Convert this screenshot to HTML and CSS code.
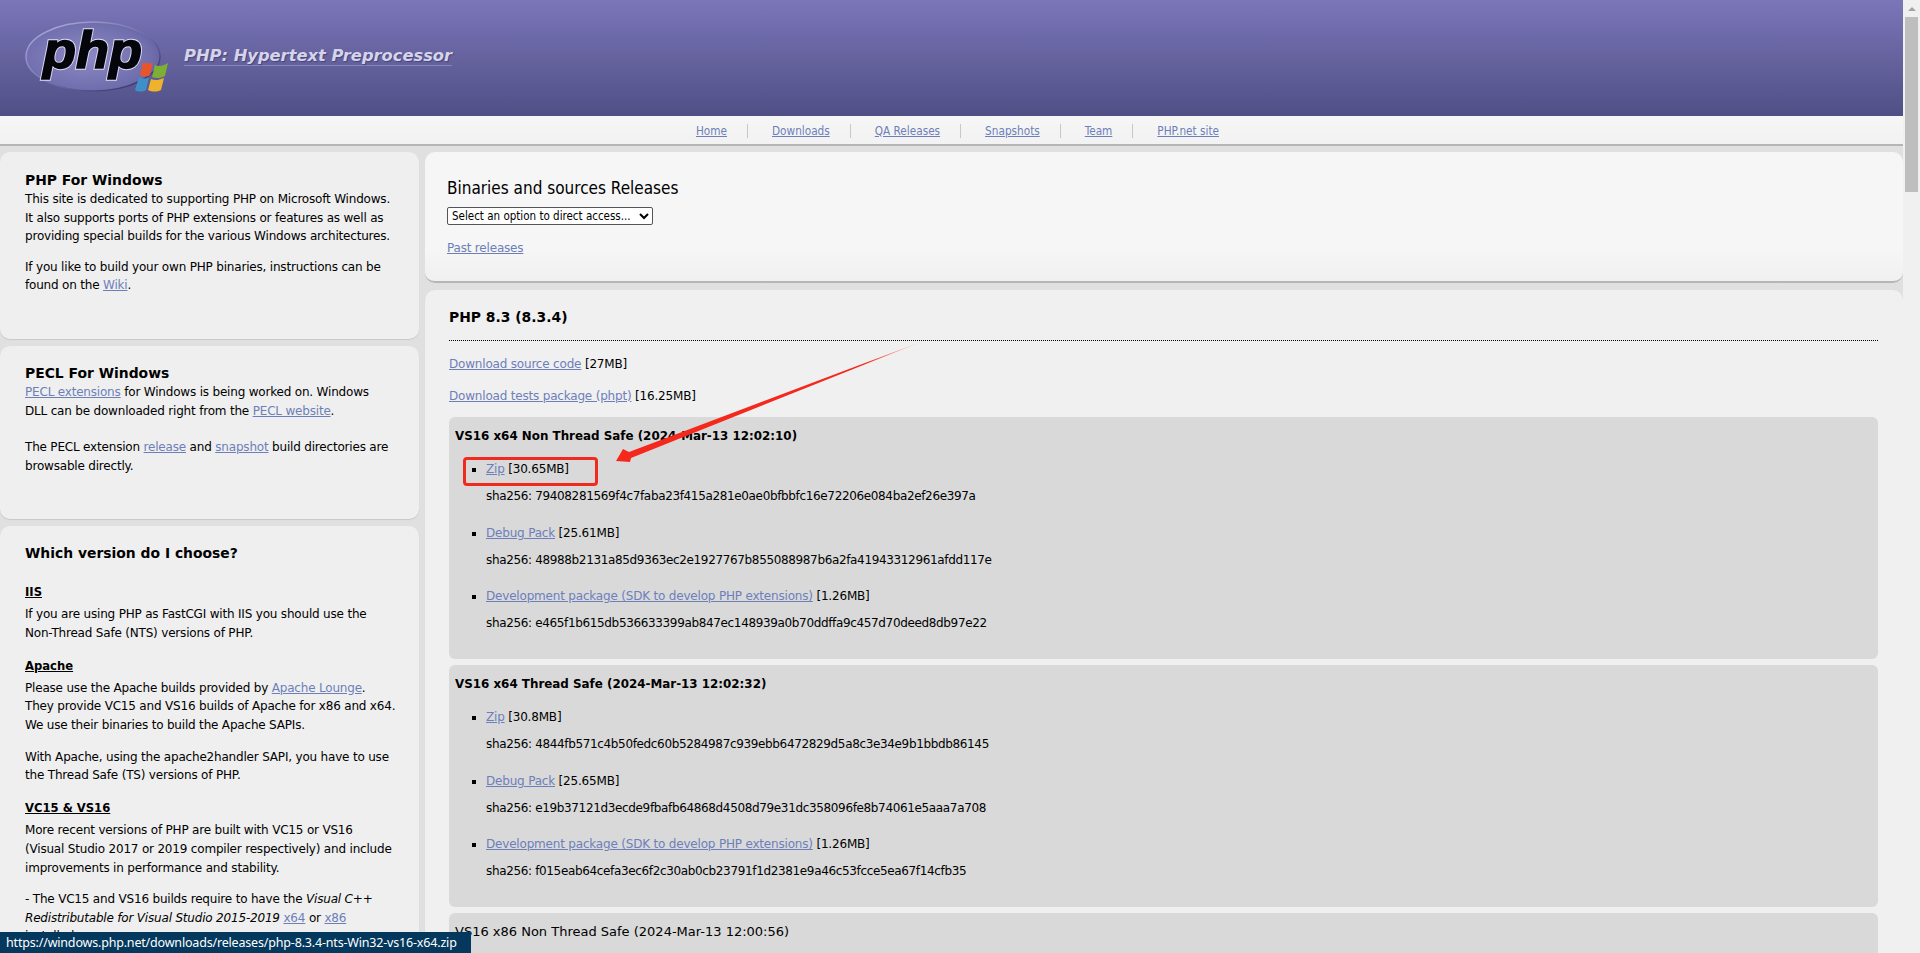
FILE: index.html
```html
<!DOCTYPE html>
<html lang="en">
<head>
  <meta charset="UTF-8">
  <title>PHP For Windows: Binaries and sources Releases</title>
  <link rel="stylesheet" href="styles.css">
</head>
<body>
  <div class="page">
    <header class="masthead">
      <svg class="logo" width="172" height="116" viewBox="0 0 172 116">
        <defs>
          <radialGradient id="oval" cx="45%" cy="50%" r="60%">
            <stop offset="0" stop-color="#8d89c4"/>
            <stop offset="0.8" stop-color="#716eae"/>
            <stop offset="1" stop-color="#625f9e"/>
          </radialGradient>
          <linearGradient id="rim" x1="0" y1="0" x2="1" y2="1">
            <stop offset="0" stop-color="#b9b6e6"/>
            <stop offset="0.55" stop-color="#6f6bad"/>
            <stop offset="1" stop-color="#24245a"/>
          </linearGradient>
        </defs>
        <ellipse cx="93" cy="56.5" rx="67" ry="34.5" fill="url(#oval)" stroke="url(#rim)" stroke-width="1.5"/>
        <text class="logo-edge" x="43" y="68" textLength="99" lengthAdjust="spacingAndGlyphs">php</text>
        <text class="logo-word" x="43" y="68" textLength="99" lengthAdjust="spacingAndGlyphs">php</text>
        <path d="M143 62c4 2 7 2 10 0l-3 13c-3 2-7 2-10 0z" fill="#e8552a"/>
        <path d="M155 65c4 2 8 1 13-2l-3 13c-4 2-8 3-13 1z" fill="#7fae34"/>
        <path d="M139 77c3 2 7 2 10 0l-3 13c-3 2-8 2-11 0z" fill="#3f90c8"/>
        <path d="M151 79c4 2 8 1 13-1l-3 12c-4 2-9 2-13 0z" fill="#eeb22c"/>
      </svg>
      <span class="tagline">PHP: Hypertext Preprocessor</span>
    </header>

    <nav class="topnav">
      <ul>
        <li><a href="#">Home</a></li>
        <li><a href="#">Downloads</a></li>
        <li><a href="#">QA Releases</a></li>
        <li><a href="#">Snapshots</a></li>
        <li><a href="#">Team</a></li>
        <li><a href="#">PHP.net site</a></li>
      </ul>
    </nav>

    <div class="columns">
      <aside class="sidebar">
        <section class="box box-intro">
          <h3>PHP For Windows</h3>
          <p>This site is dedicated to supporting PHP on Microsoft Windows. It also supports ports of PHP extensions or features as well as providing special builds for the various Windows architectures.</p>
          <p>If you like to build your own PHP binaries, instructions can be found on the <a href="#">Wiki</a>.</p>
        </section>
        <section class="box box-pecl">
          <h3>PECL For Windows</h3>
          <p><a href="#">PECL extensions</a> for Windows is being worked on. Windows<br>DLL can be downloaded right from the <a href="#">PECL website</a>.</p>
          <p class="spaced">The PECL extension <a href="#">release</a> and <a href="#">snapshot</a> build directories are browsable directly.</p>
        </section>
        <section class="box box-choose">
          <h3 class="choose-title">Which version do I choose?</h3>
          <h4>IIS</h4>
          <p>If you are using PHP as FastCGI with IIS you should use the<br>Non-Thread Safe (NTS) versions of PHP.</p>
          <h4>Apache</h4>
          <p>Please use the Apache builds provided by <a href="#">Apache Lounge</a>.<br>They provide VC15 and VS16 builds of Apache for x86 and x64.<br>We use their binaries to build the Apache SAPIs.</p>
          <p>With Apache, using the apache2handler SAPI, you have to use the Thread Safe (TS) versions of PHP.</p>
          <h4>VC15 &amp; VS16</h4>
          <p>More recent versions of PHP are built with VC15 or VS16<br>(Visual Studio 2017 or 2019 compiler respectively) and include improvements in performance and stability.</p>
          <p>- The VC15 and VS16 builds require to have the <em>Visual C++ Redistributable for Visual Studio 2015-2019</em> <a href="#">x64</a> or <a href="#">x86</a><br>installed</p>
        </section>
      </aside>

      <main class="content">
        <section class="box box-head">
          <h2>Binaries and sources Releases</h2>
          <select class="jump">
            <option>Select an option to direct access...</option>
          </select>
          <p class="past"><a href="#">Past releases</a></p>
        </section>

        <section class="box box-release">
          <h3 class="version">PHP 8.3 (8.3.4)</h3>
          <p class="source"><a href="#">Download source code</a> [27MB]</p>
          <p class="source"><a href="#">Download tests package (phpt)</a> [16.25MB]</p>

          <div class="build">
            <h4>VS16 x64 Non Thread Safe (2024-Mar-13 12:02:10)</h4>
            <ul>
              <li><a href="#">Zip</a> [30.65MB]<span class="sha">sha256: 79408281569f4c7faba23f415a281e0ae0bfbbfc16e72206e084ba2ef26e397a</span></li>
              <li><a href="#">Debug Pack</a> [25.61MB]<span class="sha">sha256: 48988b2131a85d9363ec2e1927767b855088987b6a2fa41943312961afdd117e</span></li>
              <li><a href="#">Development package (SDK to develop PHP extensions)</a> [1.26MB]<span class="sha">sha256: e465f1b615db536633399ab847ec148939a0b70ddffa9c457d70deed8db97e22</span></li>
            </ul>
          </div>

          <div class="build">
            <h4>VS16 x64 Thread Safe (2024-Mar-13 12:02:32)</h4>
            <ul>
              <li><a href="#">Zip</a> [30.8MB]<span class="sha">sha256: 4844fb571c4b50fedc60b5284987c939ebb6472829d5a8c3e34e9b1bbdb86145</span></li>
              <li><a href="#">Debug Pack</a> [25.65MB]<span class="sha">sha256: e19b37121d3ecde9fbafb64868d4508d79e31dc358096fe8b74061e5aaa7a708</span></li>
              <li><a href="#">Development package (SDK to develop PHP extensions)</a> [1.26MB]<span class="sha">sha256: f015eab64cefa3ec6f2c30ab0cb23791f1d2381e9a46c53fcce5ea67f14cfb35</span></li>
            </ul>
          </div>

          <div class="build build-cut">
            <h4>VS16 x86 Non Thread Safe (2024-Mar-13 12:00:56)</h4>
          </div>
        </section>
      </main>
    </div>

    <!-- screenshot annotation -->
    <div class="callout"></div>
    <svg class="arrow" width="320" height="140" viewBox="0 0 320 140">
      <defs>
        <linearGradient id="fade" gradientUnits="userSpaceOnUse" x1="312" y1="0" x2="2" y2="121">
          <stop offset="0" stop-color="#f5281c" stop-opacity="0"/>
          <stop offset="0.2" stop-color="#f5281c"/>
          <stop offset="1" stop-color="#f5281c"/>
        </linearGradient>
      </defs>
      <path d="M312 0 15 112 9 109 2 121 16 122 17 118z" fill="url(#fade)"/>
    </svg>

    <div class="statusbar">https://windows.php.net/downloads/releases/php-8.3.4-nts-Win32-vs16-x64.zip</div>
  </div>

  <div class="scrollbar">
    <span class="scroll-up"></span>
    <span class="scroll-thumb"></span>
  </div>
</body>
</html>
```

FILE: styles.css
```css
html, body {
  height: 100%;
  margin: 0;
  overflow: hidden;
}

body {
  display: flex;
  background-color: #e0e0e0;
  color: #000;
  font-family: "DejaVu Sans", sans-serif;
  font-size: 12px;
  letter-spacing: -0.19px;
  line-height: 18.6px;
}

a {
  color: #6d7fb9;
}

p {
  margin: 0;
}

.page {
  position: relative;
  flex: 1;
  min-width: 0;
  height: 953px;
  overflow: hidden;
}

/* header */
.masthead {
  display: flex;
  align-items: center;
  height: 116px;
  background: linear-gradient(#7b76b9, #504f85);
}

.logo {
  flex: none;
  margin-right: 12px;
}

.logo-word,
.logo-edge {
  font-family: "Liberation Sans", sans-serif;
  font-size: 52px;
  font-weight: bold;
  font-style: italic;
  letter-spacing: 0;
}

.logo-word {
  fill: #05050c;
  stroke: #05050c;
  stroke-width: 1.6px;
}

.logo-edge {
  fill: #dcdcf4;
  stroke: #dcdcf4;
  stroke-width: 3.4px;
}

.tagline {
  margin-bottom: 4px;
  padding-bottom: 1px;
  border-bottom: 1px solid #8885bb;
  color: #d6d4ea;
  font-size: 16.3px;
  font-weight: bold;
  font-style: italic;
  letter-spacing: 0;
  line-height: 17px;
  text-shadow: 1px 1px 1px #45447a;
}

/* nav */
.topnav {
  box-sizing: border-box;
  height: 30px;
  background: linear-gradient(#f6f6f6, #f2f2f2);
  border-bottom: 2px solid #b6b6b6;
}

.topnav ul {
  display: flex;
  justify-content: center;
  margin: 0;
  padding: 8px 0 0 8px;
  list-style: none;
}

.topnav li {
  height: 14px;
  padding: 0 20px 0 24px;
  border-right: 1px solid #c8c8c8;
  font-stretch: condensed;
  font-size: 11.7px;
  letter-spacing: 0;
  line-height: 14px;
}

.topnav li:last-child {
  border-right: none;
}

/* columns */
.columns {
  display: flex;
  gap: 6px;
  padding-top: 6px;
}

.sidebar {
  flex: none;
  display: flex;
  flex-direction: column;
  gap: 7px;
  width: 419px;
}

.content {
  flex: 1;
  min-width: 0;
  display: flex;
  flex-direction: column;
  gap: 7px;
}

.box {
  box-sizing: border-box;
  background: #efefef;
  border-radius: 10px;
  box-shadow: 0 1px 1px #c8c8c8;
}

.sidebar .box {
  padding-left: 25px;
  padding-right: 20px;
}

.box-intro {
  height: 187px;
  padding-top: 18px;
}

.box-pecl {
  height: 173px;
  padding-top: 17px;
}

.box-choose {
  height: 620px;
  padding-top: 17px;
}

.box h3 {
  margin: 0;
  font-size: 13.9px;
  font-weight: bold;
  letter-spacing: 0;
  line-height: 20px;
}

.box-intro p + p {
  margin-top: 12px;
}

.spaced {
  margin-top: 18px;
}

.box h3.choose-title {
  margin-bottom: 20px;
}

.box-choose h4 {
  margin: 14.6px 0 4px;
  font-size: 11.6px;
  font-weight: bold;
  letter-spacing: 0;
  line-height: 18px;
  text-decoration: underline;
}

.box-choose p {
  margin-bottom: 13px;
}

/* main */
.box-head {
  height: 131px;
  padding: 25px 0 0 22px;
  background: linear-gradient(#f6f6f6 75%, #f0f0f0);
  border-bottom: 2px solid #b6b6b6;
  box-shadow: none;
}

.box-head h2 {
  margin: 0 0 8px;
  font-size: 17px;
  font-stretch: condensed;
  font-weight: normal;
  letter-spacing: 0;
  line-height: 22px;
}

.jump {
  display: block;
  box-sizing: border-box;
  width: 206px;
  height: 18px;
  padding: 0;
  border: 1px solid #555;
  border-radius: 2px;
  background: #fff;
  color: #000;
  font-family: inherit;
  font-stretch: condensed;
  font-size: 11.5px;
}

.past {
  margin-top: 14px;
}

.box-release {
  height: 700px;
  padding: 17px 25px 0 24px;
  background: #f0f0f0;
}

.box .version {
  padding-bottom: 13px;
  border-bottom: 1px dotted #000;
}

.source {
  margin-top: 14px;
}

.source + .source {
  margin-top: 13px;
}

.build {
  box-sizing: border-box;
  height: 242px;
  margin-top: 6px;
  padding: 10px 6px 0;
  border-radius: 6px;
  background: #d9d9d9;
}

.source + .build {
  margin-top: 12px;
}

.build h4 {
  margin: 0 0 15px;
  font-size: 11.9px;
  font-weight: bold;
  letter-spacing: 0;
  line-height: 18px;
}

.build-cut h4 {
  font-size: 13px;
  font-weight: normal;
}

.build ul {
  margin: 0;
  padding: 0 0 0 31px;
  list-style: square;
}

.build li {
  margin-bottom: 17.8px;
}

.sha {
  display: block;
  margin-top: 8.5px;
  letter-spacing: -0.35px;
}

/* annotation and status */
.callout {
  position: absolute;
  left: 463px;
  top: 457px;
  width: 135px;
  height: 29px;
  box-sizing: border-box;
  border: 3px solid #f02b1d;
  border-radius: 4px;
}

.arrow {
  position: absolute;
  left: 614px;
  top: 340px;
}

.statusbar {
  position: absolute;
  left: 0;
  bottom: 0;
  box-sizing: border-box;
  width: 471px;
  height: 21px;
  padding-left: 6px;
  background: #04385c;
  color: #fff;
  font-family: "Noto Sans", sans-serif;
  font-size: 12.5px;
  letter-spacing: -0.18px;
  line-height: 21px;
  white-space: nowrap;
  overflow: hidden;
}

/* scrollbar */
.scrollbar {
  flex: none;
  position: relative;
  width: 17px;
  height: 953px;
  background: #f0f0f0;
}

.scroll-up {
  display: block;
  width: 0;
  height: 0;
  margin: 7px auto 0;
  border-left: 4px solid transparent;
  border-right: 4px solid transparent;
  border-bottom: 4px solid #a3a3a3;
}

.scroll-thumb {
  display: block;
  width: 13px;
  height: 175px;
  margin: 6px auto 0;
  background: #bebebe;
}
```
